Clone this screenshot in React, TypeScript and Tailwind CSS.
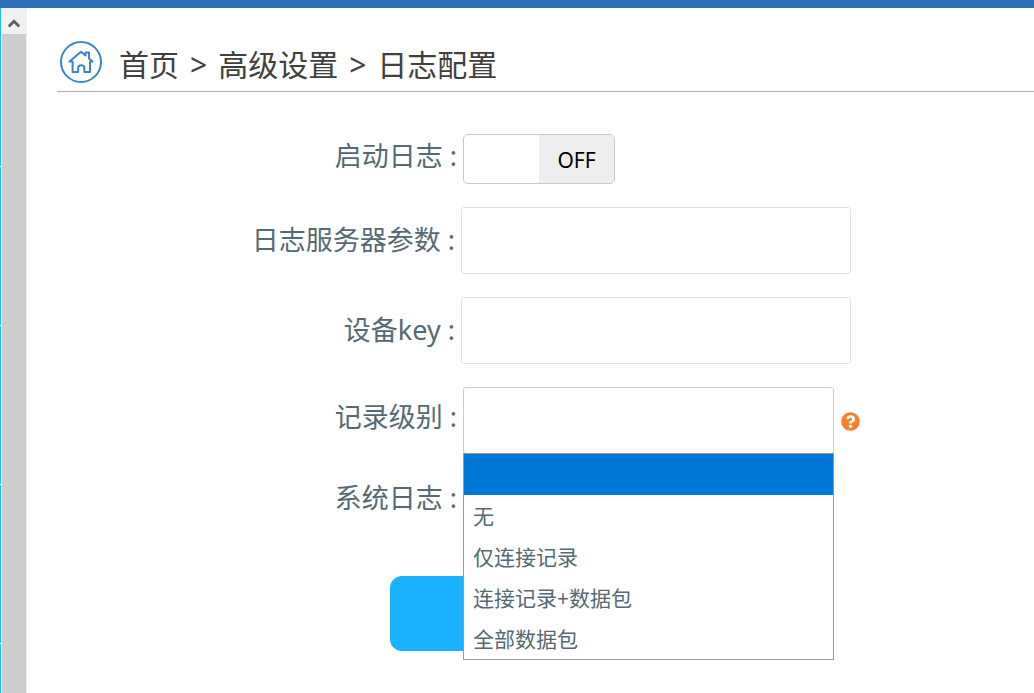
import React, { useState } from 'react';
import { FaQuestionCircle } from 'react-icons/fa';

const levels = ['', '无', '仅连接记录', '连接记录+数据包', '全部数据包'];

const HomeIcon = () => (
  <svg viewBox="0 0 42 42" className="h-[42px] w-[42px]" fill="none" stroke="#3a86c8" aria-hidden="true">
    <circle cx="21" cy="21" r="20" strokeWidth="2" />
    <path
      d="M9.5 20.5 L21 10.8 L25.5 14.5 V11.5 H29 V17.5 L32.5 20.5 H30 V31 H24.3 V26.5 Q24 24.3 21.3 24.3 Q18.5 24.3 18.2 26.5 V31 H12.6 V20.5 Z"
      strokeWidth="2"
      strokeLinejoin="round"
    />
  </svg>
);

const SideScroll = () => (
  <div className="flex w-[27px] shrink-0 gap-px">
    <div className="flex w-px flex-col gap-px">
      <div className="h-[158px] bg-[#14c4e4]" />
      <div className="h-[158px] bg-[#14c4e4]" />
      <div className="h-[158px] bg-[#14c4e4]" />
      <div className="h-[158px] bg-[#14c4e4]" />
      <div className="flex-1 bg-[#14c4e4]" />
    </div>
    <div className="flex flex-1 flex-col bg-[#f0f0f0] pr-px">
      <button type="button" aria-label="向上滚动" className="flex h-[26px] items-center justify-center pt-1">
        <svg viewBox="0 0 12 9" className="h-[9px] w-3" fill="none" stroke="#606060" strokeWidth="2.8" aria-hidden="true">
          <path d="M0.8 7.5 L6 2.2 L11.2 7.5" />
        </svg>
      </button>
      <div className="flex-1 bg-[#cdcdcd]" />
    </div>
  </div>
);

interface FieldProps {
  id: string;
  label: string;
  className?: string;
  children?: React.ReactNode;
}

const Field: React.FC<FieldProps> = ({ id, label, className = '', children }) => (
  <div className={`flex items-start ${className}`}>
    <label htmlFor={id} className="shrink-0 text-right text-[27px] leading-10 text-[#566a73]">
      {label} :
    </label>
    {children}
  </div>
);

const App: React.FC = () => {
  const [enabled, setEnabled] = useState(false);
  const [level, setLevel] = useState('');

  return (
    <div className="flex min-h-screen flex-col bg-white font-['Noto_Sans','Noto_Sans_CJK_SC',sans-serif]">
      <header className="h-2 bg-[#2e6db8]" />
      <div className="flex flex-1">
        <SideScroll />

        <main className="min-w-0 flex-1 pl-[30px]">
          <nav className="flex h-[84px] items-center gap-[17px] border-b border-[#b4b4b4] pl-[3px] pt-6">
            <HomeIcon />
            <div className="flex gap-[11px] pt-[6px] text-[30px] leading-10 text-[#404040]">
              <a href="#home">首页</a>
              <span>&gt;</span>
              <a href="#advanced">高级设置</a>
              <span>&gt;</span>
              <span>日志配置</span>
            </div>
          </nav>

          <form className="pt-[42px]" onSubmit={(e) => e.preventDefault()}>
            <Field id="enable" label="启动日志" className="h-[73px] [&>label]:w-[400px] [&>label]:pt-[2px]">
              <div className="relative ml-[6px] flex h-[50px] w-[152px] overflow-hidden rounded-[5px] border border-[#c8c8c8]">
                <input
                  id="enable"
                  type="checkbox"
                  role="switch"
                  checked={enabled}
                  onChange={(e) => setEnabled(e.target.checked)}
                  className="absolute inset-0 h-full w-full cursor-pointer opacity-0"
                />
                <span className="flex-1" />
                <span className="flex flex-1 items-center justify-center bg-[#eeeeee] pt-1 text-[21px] text-black">
                  {enabled ? 'ON' : 'OFF'}
                </span>
              </div>
            </Field>

            <Field id="server" label="日志服务器参数" className="h-[90px] [&>label]:w-[398px] [&>label]:pt-[13px]">
              <input id="server" type="text" className="ml-[6px] h-[67px] w-[390px] rounded-[3px] border border-[#e2e2e2] px-3 text-[21px] outline-none" />
            </Field>

            <Field id="key" label="设备key" className="h-[90px] [&>label]:w-[398px] [&>label]:pt-[13px]">
              <input id="key" type="text" className="ml-[6px] h-[67px] w-[390px] rounded-[3px] border border-[#e2e2e2] px-3 text-[21px] outline-none" />
            </Field>

            <Field id="level" label="记录级别" className="h-[84px] [&>label]:w-[400px] [&>label]:pt-[10px]">
              <div className="relative ml-[6px] w-[371px]">
                <select
                  id="level"
                  value={level}
                  onChange={(e) => setLevel(e.target.value)}
                  className="block h-[67px] w-full appearance-none rounded-[3px] border border-[#cccccc] bg-white px-2 text-[21px] text-[#566a73] outline-none"
                >
                  {levels.map((item) => (
                    <option key={item} value={item}>{item}</option>
                  ))}
                </select>
                {/* Open option list, floats over the rows below */}
                <ul className="absolute left-0 top-[66px] z-10 w-full border border-[#999999] bg-white text-[21px] leading-[43px] text-[#566a73]">
                  {levels.map((item) => (
                    <li
                      key={item}
                      onClick={() => setLevel(item)}
                      className={`h-[41px] cursor-default pl-[9px] ${item === level ? 'bg-[#0078d7] text-white' : ''}`}
                    >
                      {item}
                    </li>
                  ))}
                </ul>
              </div>
              <button type="button" aria-label="帮助" className="ml-[7px] mt-[25px] text-[#ff7f27]">
                <FaQuestionCircle className="h-[19px] w-[19px]" />
              </button>
            </Field>

            <Field id="syslog" label="系统日志" className="h-[105px] [&>label]:w-[400px] [&>label]:pt-[7px]">
              <output id="syslog" />
            </Field>

            <button type="submit" aria-label="保存" className="ml-[333px] block h-[75px] w-[300px] rounded-xl bg-[#1ab2ff]" />
          </form>
        </main>
      </div>
    </div>
  );
};

export default App;
